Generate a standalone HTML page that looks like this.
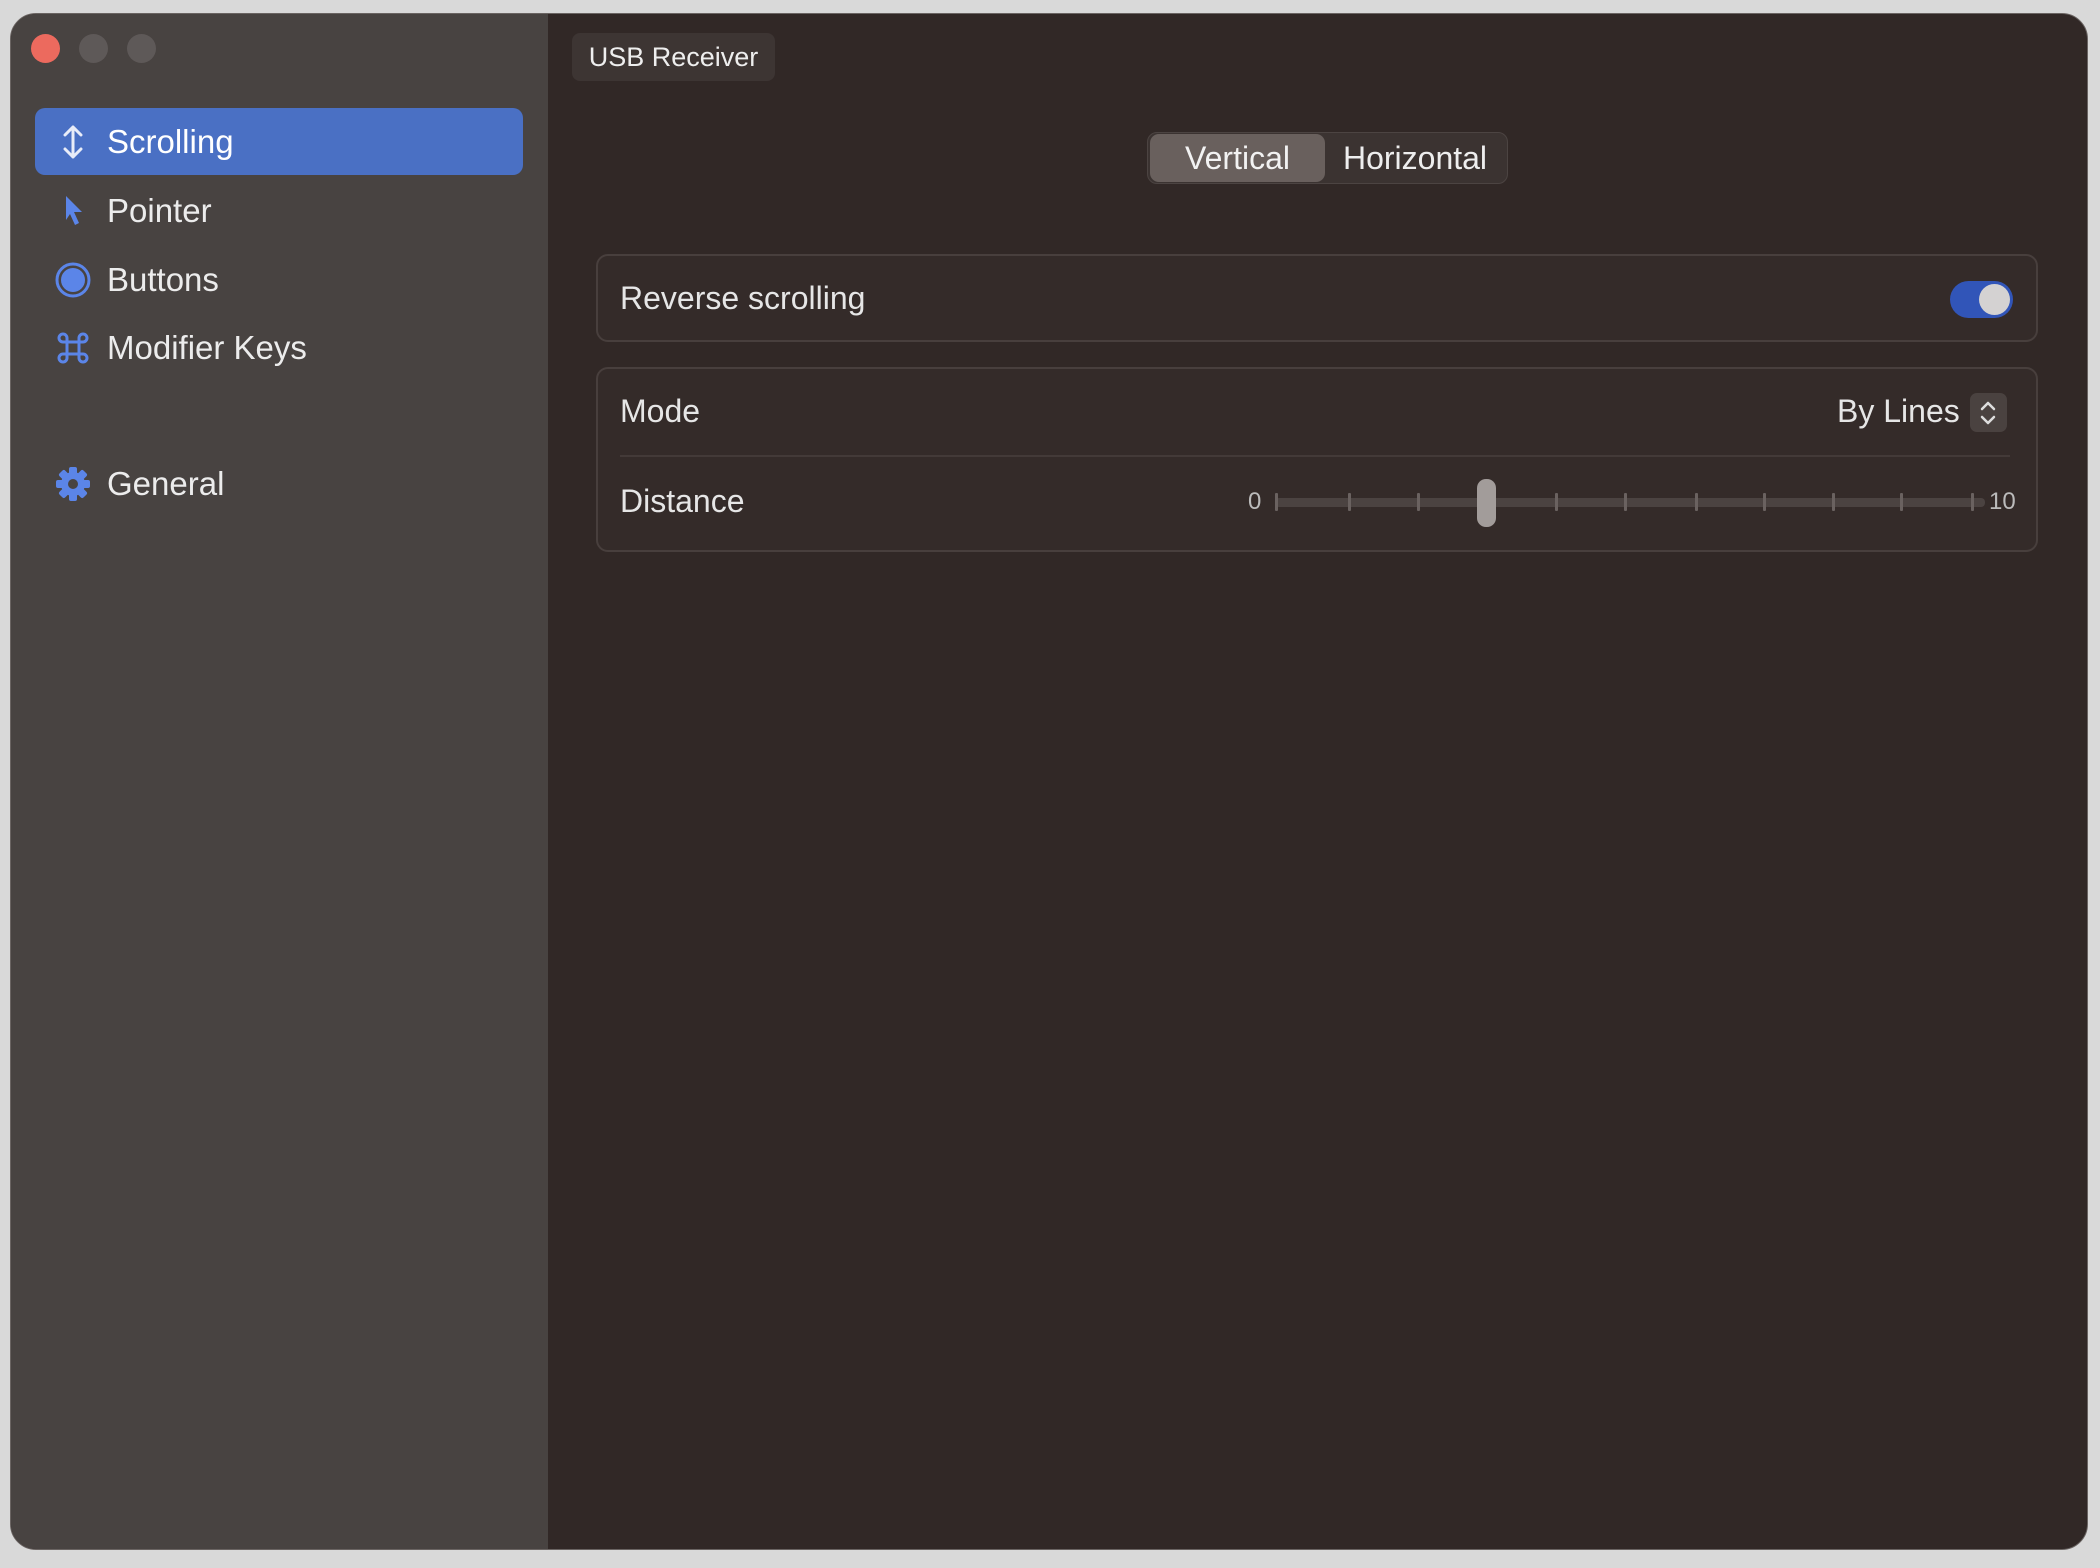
<!DOCTYPE html>
<html><head><meta charset="utf-8"><style>
*{margin:0;padding:0;box-sizing:border-box}
body{width:2100px;height:1568px;background:#d9d9d9;font-family:"Liberation Sans",sans-serif;position:relative;overflow:hidden}
.win{position:absolute;left:10px;top:13px;width:2078px;height:1537px;border-radius:26px;background:#312826;overflow:hidden;border:1px solid #6a6462}
.side{position:absolute;left:0;top:0;width:537px;height:100%;background:#484341}
.tl{position:absolute;top:20px;width:29px;height:29px;border-radius:50%;background:#5e5958}
.abs{position:absolute}
.item{position:absolute;left:96px;font-size:33px;color:#ececec;line-height:40px}
.ico{position:absolute;left:42px;width:40px;height:40px}
.card{position:absolute;left:585px;width:1442px;border:2px solid #483f3d;border-radius:12px;background:#342b29}
.lbl{position:absolute;font-size:32px;color:#e6e6e6;line-height:40px}
.tick{position:absolute;top:479px;width:3px;height:18px;background:#6a6260;border-radius:1px}
</style></head><body>
<div class="win">
 <div class="side">
  <div class="tl" style="left:20px;background:#ec6a5e"></div>
  <div class="tl" style="left:68px"></div>
  <div class="tl" style="left:116px"></div>
  <div class="abs" style="left:24px;top:94px;width:488px;height:67px;border-radius:10px;background:#4a70c4"></div>
  <svg class="ico" style="top:108px" viewBox="0 0 40 40" fill="none" stroke="#e8ecf8" stroke-width="3" stroke-linecap="round" stroke-linejoin="round"><path d="M20 5v30M12 13l8-8 8 8M12 27l8 8 8-8"/></svg>
  <div class="item" style="top:108px;color:#fff">Scrolling</div>
  <svg class="ico" style="top:177px" viewBox="0 0 40 40"><path d="M13 5l16 16h-8l5 11-4 2-5-11-4 6z" fill="#5b85e8"/></svg>
  <div class="item" style="top:177px">Pointer</div>
  <svg class="ico" style="top:246px" viewBox="0 0 40 40"><circle cx="20" cy="20" r="16" fill="none" stroke="#5b85e8" stroke-width="3"/><circle cx="20" cy="20" r="12" fill="#5b85e8"/></svg>
  <div class="item" style="top:246px">Buttons</div>
  <svg class="ico" style="top:314px" viewBox="0 0 40 40" fill="none" stroke="#5b85e8" stroke-width="3"><path d="M14 14h12v12H14zM14 14h-4a4 4 0 1 1 4-4v4M26 14V10a4 4 0 1 1 4 4h-4M26 26h4a4 4 0 1 1-4 4v-4M14 26v4a4 4 0 1 1-4-4h4"/></svg>
  <div class="item" style="top:314px">Modifier Keys</div>
  <svg class="ico" style="top:450px" viewBox="0 0 40 40"><g fill="#5b85e8"><circle cx="20" cy="20" r="12"/><rect x="16" y="3" width="8" height="34" rx="2"/><rect x="16" y="3" width="8" height="34" rx="2" transform="rotate(45 20 20)"/><rect x="16" y="3" width="8" height="34" rx="2" transform="rotate(90 20 20)"/><rect x="16" y="3" width="8" height="34" rx="2" transform="rotate(135 20 20)"/></g><circle cx="20" cy="20" r="5" fill="#484341"/></svg>
  <div class="item" style="top:450px">General</div>
 </div>
 <div class="abs" style="left:561px;top:19px;width:203px;height:48px;border-radius:8px;background:#3d3533;color:#eee;font-size:27px;line-height:48px;text-align:center">USB Receiver</div>
 <div class="abs" style="left:1136px;top:118px;width:361px;height:52px;border-radius:10px;background:#3b3331;border:1px solid #4c4442"></div>
 <div class="abs" style="left:1139px;top:120px;width:175px;height:48px;border-radius:9px;background:#69605d;color:#f2f2f2;font-size:32px;line-height:48px;text-align:center">Vertical</div>
 <div class="abs" style="left:1314px;top:120px;width:180px;height:48px;color:#eee;font-size:32px;line-height:48px;text-align:center">Horizontal</div>
 <div class="card" style="top:240px;height:88px"></div>
 <div class="lbl" style="left:609px;top:264px">Reverse scrolling</div>
 <div class="abs" style="left:1939px;top:267px;width:63px;height:37px;border-radius:19px;background:#3155b8"></div>
 <div class="abs" style="left:1968px;top:270px;width:31px;height:31px;border-radius:50%;background:#d4d2d2"></div>
 <div class="card" style="top:353px;height:185px"></div>
 <div class="lbl" style="left:609px;top:377px">Mode</div>
 <div class="lbl" style="left:1826px;top:377px">By Lines</div>
 <div class="abs" style="left:1959px;top:379px;width:37px;height:39px;border-radius:7px;background:#4a4240"></div>
 <svg class="abs" style="left:1966px;top:384px" width="22" height="30" viewBox="0 0 22 30" fill="none" stroke="#ddd" stroke-width="2.5" stroke-linecap="round" stroke-linejoin="round"><path d="M5 11l6-6 6 6M5 19l6 6 6-6"/></svg>
 <div class="abs" style="left:609px;top:441px;width:1390px;height:2px;background:#433a38"></div>
 <div class="lbl" style="left:609px;top:467px">Distance</div>
 <div class="abs" style="left:1237px;top:473px;font-size:24px;color:#bbb;line-height:30px">0</div>
 <div class="abs" style="left:1978px;top:473px;font-size:24px;color:#bbb;line-height:30px">10</div>
 <div class="abs" style="left:1264px;top:484px;width:710px;height:9px;border-radius:4px;background:#4b4341"></div>
 <div class="tick" style="left:1264px"></div><div class="tick" style="left:1337px"></div><div class="tick" style="left:1406px"></div><div class="tick" style="left:1475px"></div><div class="tick" style="left:1544px"></div><div class="tick" style="left:1613px"></div><div class="tick" style="left:1684px"></div><div class="tick" style="left:1752px"></div><div class="tick" style="left:1821px"></div><div class="tick" style="left:1889px"></div><div class="tick" style="left:1960px"></div>
 <div class="abs" style="left:1466px;top:465px;width:19px;height:48px;border-radius:9px;background:#a29c9a"></div>
</div>
</body></html>
